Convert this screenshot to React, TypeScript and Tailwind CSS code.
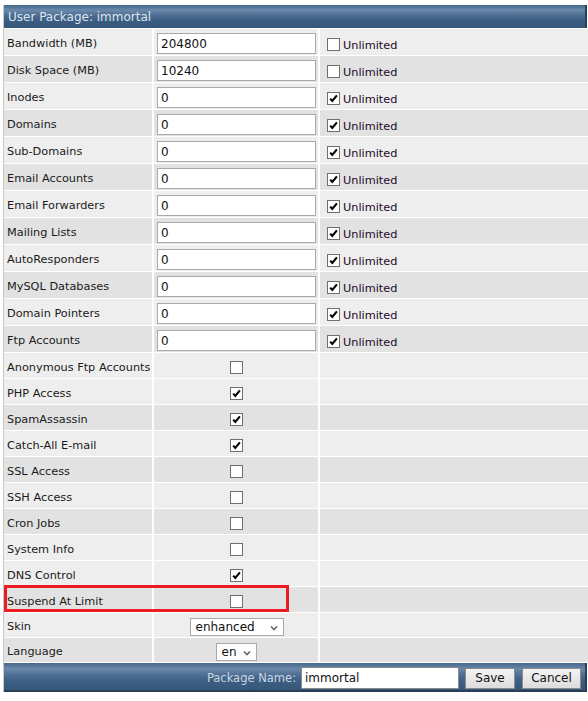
import React from "react";

type Limit = { label: string; value: string; unlimited: boolean; dark: boolean };
type Flag = { label: string; checked: boolean; dark: boolean };

const limits: Limit[] = [
  { label: "Bandwidth (MB)", value: "204800", unlimited: false, dark: false },
  { label: "Disk Space (MB)", value: "10240", unlimited: false, dark: true },
  { label: "Inodes", value: "0", unlimited: true, dark: false },
  { label: "Domains", value: "0", unlimited: true, dark: true },
  { label: "Sub-Domains", value: "0", unlimited: true, dark: false },
  { label: "Email Accounts", value: "0", unlimited: true, dark: true },
  { label: "Email Forwarders", value: "0", unlimited: true, dark: false },
  { label: "Mailing Lists", value: "0", unlimited: true, dark: true },
  { label: "AutoResponders", value: "0", unlimited: true, dark: false },
  { label: "MySQL Databases", value: "0", unlimited: true, dark: true },
  { label: "Domain Pointers", value: "0", unlimited: true, dark: false },
  { label: "Ftp Accounts", value: "0", unlimited: true, dark: true },
];

const flags: Flag[] = [
  { label: "Anonymous Ftp Accounts", checked: false, dark: false },
  { label: "PHP Access", checked: true, dark: false },
  { label: "SpamAssassin", checked: true, dark: true },
  { label: "Catch-All E-mail", checked: true, dark: false },
  { label: "SSL Access", checked: false, dark: true },
  { label: "SSH Access", checked: false, dark: false },
  { label: "Cron Jobs", checked: false, dark: true },
  { label: "System Info", checked: false, dark: false },
  { label: "DNS Control", checked: true, dark: false },
];

const font = "font-['DejaVu_Sans','Liberation_Sans',sans-serif]";
const barBg =
  "bg-[linear-gradient(to_bottom,#46678c_0%,#6a89ab_22%,#4d6d92_45%,#3b5d82_70%,#355779_100%)]";
const labelCls = "flex items-center pl-[3px] pt-[5px] text-[11.3px] text-[#1a1a1a]";

function Check({ checked }: { checked: boolean }) {
  return (
    <span className="relative inline-block h-[13px] w-[13px] shrink-0 border border-[#6f6f6f] bg-white">
      {checked && (
        <svg viewBox="0 0 11 11" className="absolute left-0 top-0 h-[11px] w-[11px]">
          <path d="M2.2 5.6 L4.3 8 L8.9 2.4" stroke="#000" strokeWidth="2.1" fill="none" />
        </svg>
      )}
    </span>
  );
}

function cellBg(dark: boolean) {
  return dark ? "bg-[#e2e2e2]" : "bg-[#eeeeee]";
}

function Select({ value, width }: { value: string; width: string }) {
  return (
    <div
      className={`flex h-[18px] ${width} items-center justify-between border border-[#a9a9a9] bg-white pl-[5px] pr-[5px] text-[12px] text-[#111]`}
    >
      <span className="leading-none">{value}</span>
      <svg viewBox="0 0 8 6" className="mt-[2px] h-[6px] w-[8px]">
        <path d="M1 1.5 L4 4.5 L7 1.5" stroke="#666" strokeWidth="1.6" fill="none" />
      </svg>
    </div>
  );
}

export default function App() {
  return (
    <div className={`min-h-[701px] w-[588px] bg-white pt-[5px] ${font}`}>
      <div className="ml-[3px] border-l border-[#c8c8c8] pl-0">
        {/* title bar */}
        <div
          className={`flex h-[23px] w-[583px] items-center border-r-2 border-[#2a3f57] pl-[4px] pt-[1px] text-[12px] text-[#dde5ee] ${barBg}`}
        >
          User Package: immortal
        </div>

        <div className="mt-px flex flex-col gap-y-px bg-white">
          {limits.map((r) => (
            <div key={r.label} className="grid h-[26px] grid-cols-[148px_164px_1fr] gap-x-[2px]">
              <div className={`${labelCls} ${cellBg(r.dark)}`}>{r.label}</div>
              <div className={`flex items-center pl-[3px] pt-[3px] ${cellBg(r.dark)}`}>
                <input
                  readOnly
                  value={r.value}
                  className="h-[21px] w-[159px] border border-[#a9a9a9] bg-white px-[3px] text-[12px] text-[#111] outline-none"
                />
              </div>
              <div className={`flex items-center pl-[7px] pt-[4px] ${cellBg(r.dark)}`}>
                <Check checked={r.unlimited} />
                <span className="ml-[3px] mt-[4px] text-[11.3px] text-[#1c0a2a]">Unlimited</span>
              </div>
            </div>
          ))}

          {flags.map((r) => (
            <div key={r.label} className="grid h-[25px] grid-cols-[148px_164px_1fr] gap-x-[2px]">
              <div className={`${labelCls} ${cellBg(r.dark)}`}>{r.label}</div>
              <div className={`flex items-center justify-center pt-[3px] ${cellBg(r.dark)}`}>
                <Check checked={r.checked} />
              </div>
              <div className={cellBg(r.dark)} />
            </div>
          ))}

          <div className="relative grid h-[25px] grid-cols-[148px_164px_1fr] gap-x-[2px]">
            <div className={`${labelCls} ${cellBg(true)}`}>Suspend At Limit</div>
            <div className={`flex items-center justify-center pt-[3px] ${cellBg(true)}`}>
              <Check checked={false} />
            </div>
            <div className={cellBg(true)} />
            <div className="pointer-events-none absolute left-0 top-[-2px] h-[27px] w-[285px] border-[3px] border-[#ec1c24]" />
          </div>

          <div className="grid h-[24px] grid-cols-[148px_164px_1fr] gap-x-[2px]">
            <div className={`${labelCls} ${cellBg(false)}`}>Skin</div>
            <div className={`flex items-center justify-center pl-[1px] pt-[3px] ${cellBg(false)}`}>
              <Select value="enhanced" width="w-[94px]" />
            </div>
            <div className={cellBg(false)} />
          </div>

          <div className="grid h-[24px] grid-cols-[148px_164px_1fr] gap-x-[2px]">
            <div className={`${labelCls} ${cellBg(true)}`}>Language</div>
            <div className={`flex items-center justify-center pt-[3px] ${cellBg(true)}`}>
              <Select value="en" width="w-[41px]" />
            </div>
            <div className={cellBg(true)} />
          </div>
        </div>

        {/* footer bar */}
        <div
          className={`mt-px flex h-[29px] w-[583px] items-center justify-end gap-[6px] border-b-2 border-r-2 border-[#2a3f57] pr-[4px] pt-[3px] ${barBg}`}
        >
          <span className="mr-[-1px] mt-[2px] text-[11.5px] text-[#c9d5e2]">Package Name:</span>
          <input
            readOnly
            value="immortal"
            className="h-[22px] w-[158px] border border-[#8a8a8a] bg-white px-[3px] text-[12px] text-[#111] outline-none"
          />
          <button className="h-[21px] w-[50px] border border-[#8c8c8c] bg-[linear-gradient(to_bottom,#f4f4f4,#dcdcdc)] text-[12px] text-[#111]">
            Save
          </button>
          <button className="ml-[1px] h-[21px] w-[59px] border border-[#8c8c8c] bg-[linear-gradient(to_bottom,#f4f4f4,#dcdcdc)] text-[12px] text-[#111]">
            Cancel
          </button>
        </div>
      </div>
    </div>
  );
}
